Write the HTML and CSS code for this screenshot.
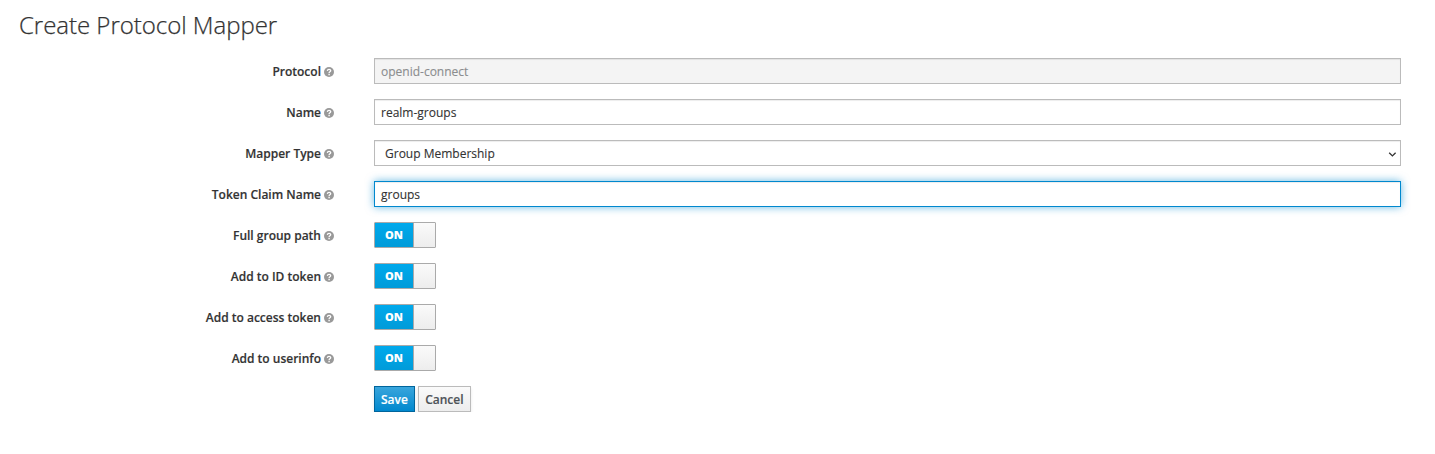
FILE: index.html
```html
<!DOCTYPE html>
<html lang="en">
<head>
<meta charset="utf-8">
<title>Create Protocol Mapper</title>
<link rel="stylesheet" href="styles.css">
</head>
<body>
<svg class="defs" width="0" height="0"><symbol id="help" viewBox="0 0 10 10"><circle cx="5" cy="5" r="5" fill="#999"/><path d="M3.3 3.9C3.5 2.8 4.2 2.4 5 2.4c1 0 1.7.6 1.7 1.4C6.7 4.8 5.1 4.9 5.1 6" fill="none" stroke="#fff" stroke-width="1.3"/><path d="M4.4 6.8h1.4v1.4H4.4z" fill="#fff"/></symbol></svg>
<main class="page">
<h1 class="title">Create Protocol Mapper</h1>
<form class="form">
<div class="row"><label class="label">Protocol <svg class="help"><use href="#help"/></svg></label><div class="control control-disabled">openid-connect</div></div>
<div class="row"><label class="label">Name <svg class="help"><use href="#help"/></svg></label><div class="control">realm-groups</div></div>
<div class="row"><label class="label">Mapper Type <svg class="help"><use href="#help"/></svg></label><div class="control control-select"><span>Group Membership</span><svg class="chevron" viewBox="0 0 9 7"><path d="M1.2 1.7l3.2 3.2 3.2-3.2" fill="none" stroke="#333" stroke-width="1.3"/></svg></div></div>
<div class="row"><label class="label">Token Claim Name <svg class="help"><use href="#help"/></svg></label><div class="control control-focus">groups</div></div>
<div class="row"><label class="label">Full group path <svg class="help"><use href="#help"/></svg></label><div class="switch"><span class="on">ON</span><span class="knob"></span></div></div>
<div class="row"><label class="label">Add to ID token <svg class="help"><use href="#help"/></svg></label><div class="switch"><span class="on">ON</span><span class="knob"></span></div></div>
<div class="row"><label class="label">Add to access token <svg class="help"><use href="#help"/></svg></label><div class="switch"><span class="on">ON</span><span class="knob"></span></div></div>
<div class="row"><label class="label">Add to userinfo <svg class="help"><use href="#help"/></svg></label><div class="switch"><span class="on">ON</span><span class="knob"></span></div></div>
<div class="row"><span class="label"></span><div class="actions"><button type="button" class="btn btn-primary">Save</button><button type="button" class="btn btn-cancel">Cancel</button></div></div>
</form>
</main>
</body>
</html>
```
FILE: styles.css
```css
* { box-sizing: border-box; }
body { margin: 0; background: #fff; color: #333; font: 12px/20px "Open Sans", sans-serif; }
.defs { display: none; }
.page { padding: 8px 34px 0 19px; }
.title { margin: 0; height: 50px; font-size: 24px; line-height: 33px; font-weight: 300; letter-spacing: -.03px; -webkit-text-stroke: .25px #333; }
.form { display: grid; gap: 15px; }
.row { display: grid; grid-template-columns: 315px 1fr; column-gap: 40px; height: 26px; }
.label { display: flex; justify-content: flex-end; align-items: center; gap: 3px; font-weight: 600; padding-top: 1px; -webkit-text-stroke: .15px #333; }
.help { width: 10px; height: 10px; }
.control { display: flex; align-items: center; height: 26px; padding: 1px 6px 0; border: 1px solid #bbb; background: #fff; box-shadow: inset 0 1px 1px rgba(0,0,0,.075); -webkit-text-stroke: .12px currentColor; }
.control-disabled { background: #f4f4f4; color: #8b8d8f; }
.control-select { justify-content: space-between; padding: 2px 3px 0 10px; }
.chevron { width: 9px; height: 7px; }
.control-focus { border-color: #0088ce; box-shadow: inset 0 1px 1px rgba(0,0,0,.075), 0 0 8px rgba(0,136,206,.6); }
.switch { display: flex; width: 62px; height: 26px; border: 1px solid #aaa; border-radius: 1px; }
.on { width: 38px; background: linear-gradient(#00a9ec, #009bd9); color: #fff; font-size: 11px; font-weight: 800; line-height: 24px; text-align: center; }
.knob { flex: 1; border-left: 1px solid #aaa; background: linear-gradient(#fafafa, #ededed); }
.actions { display: flex; gap: 3px; }
.btn { height: 26px; padding: 1px 6px 0; border: 1px solid #bbb; background: linear-gradient(#fafafa, #ededed); box-shadow: 0 2px 3px rgba(3,3,3,.1); color: #4d5258; font: 600 12px/20px "Open Sans", sans-serif; -webkit-text-stroke: .15px currentColor; }
.btn-primary { border-color: #00659c; background: linear-gradient(#39a5dc, #0088ce); color: #fff; }
.btn-cancel { width: 53px; }
```
